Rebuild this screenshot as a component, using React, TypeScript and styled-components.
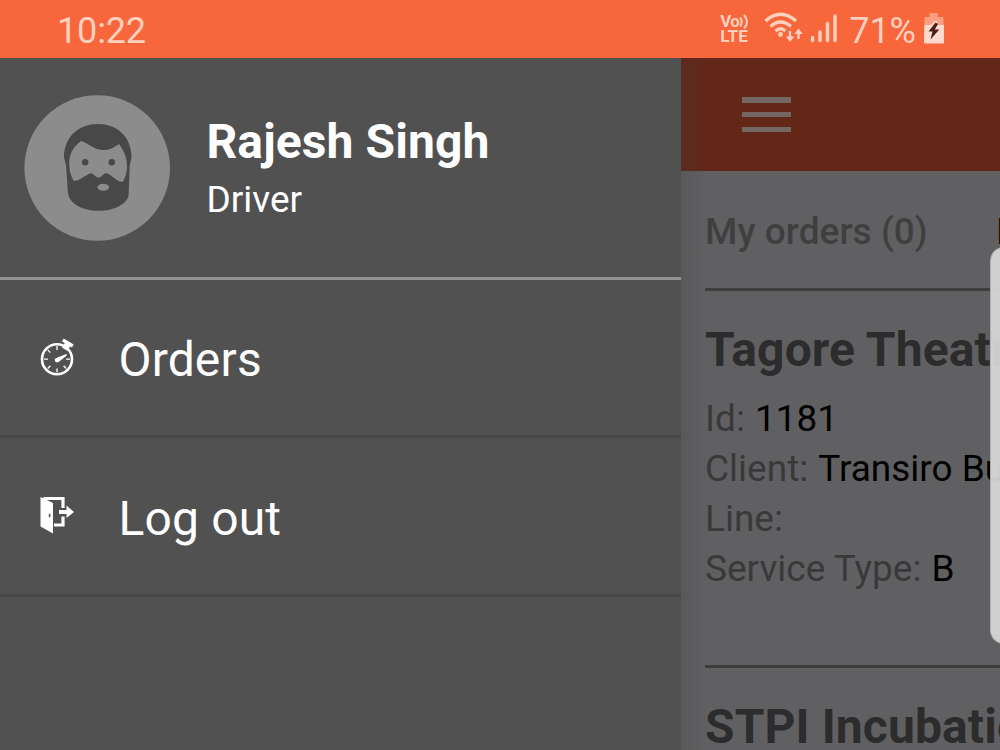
import React from "react";
import styled, { createGlobalStyle } from "styled-components";

const GlobalStyle = createGlobalStyle`
  * { box-sizing: border-box; }
  body { margin: 0; overflow: hidden; font-family: Roboto, "Liberation Sans", sans-serif; }
`;

const Screen = styled.div`
  position: relative;
  width: 1000px;
  height: 750px;
  overflow: hidden;
  display: flex;
  flex-direction: column;
  background: #515151;
`;

const StatusBar = styled.header`
  height: 58px;
  flex: none;
  display: flex;
  align-items: flex-start;
  padding: 9px 55px 0 57px;
  background: #f8663c;
  color: #ffd0bd;
`;

const StatusText = styled.span<{ $spacing?: number }>`
  margin-top: 1px;
  font-size: 36px;
  line-height: 42px;
  white-space: nowrap;
  letter-spacing: ${(p) => p.$spacing ?? 0}px;
`;

const StatusIcons = styled.div`
  margin-left: auto;
  display: flex;
  align-items: flex-start;
`;

const StatusGlyph = styled.span<{ $right?: number; $left?: number; $top: number }>`
  display: flex;
  margin: ${(p) => p.$top}px ${(p) => p.$right ?? 0}px 0 ${(p) => p.$left ?? 0}px;
`;

const VoLte = styled.div`
  display: flex;
  flex-direction: column;
  width: 31px;
  margin: 4px 13px 0 0;
  font-size: 17px;
  font-weight: 700;
  line-height: 16px;
  letter-spacing: 0.15px;
  white-space: nowrap;
`;

const VoLine = styled.span`
  display: flex;
  height: 15px;
  letter-spacing: -0.6px;
`;

const Body = styled.div`
  flex: 1;
  min-height: 0;
  display: flex;
`;

const Drawer = styled.aside`
  width: 681px;
  flex: none;
  background: #515151;
  color: #fff;
`;

const Profile = styled.section`
  height: 221.5px;
  display: flex;
  align-items: flex-start;
  padding: 37px 24px 0;
  border-bottom: 3px solid #939393;
`;

const ProfileText = styled.div`
  margin: 19px 0 0 35.5px;
  display: flex;
  flex-direction: column;
`;

const Name = styled.strong`
  font-size: 48px;
  line-height: 56px;
  font-weight: 700;
  letter-spacing: 0.1px;
`;

const Role = styled.span`
  font-size: 37px;
  line-height: 44px;
  margin-top: 8px;
`;

const MenuItem = styled.div`
  height: 158.5px;
  display: flex;
  align-items: center;
  padding-left: 36px;
  border-bottom: 3px solid #484848;
`;

const MenuLabel = styled.span`
  margin: 6px 0 0 40.5px;
  font-size: 48px;
  line-height: 56px;
  letter-spacing: 0.15px;
`;

const Page = styled.main`
  position: relative;
  flex: 1;
  min-width: 0;
  overflow: hidden;
  background: #606062;
`;

const EdgeShadow = styled.div`
  position: absolute;
  inset: 0 auto 0 0;
  width: 28px;
  background: linear-gradient(90deg, rgba(60, 60, 60, 0.2), rgba(60, 60, 60, 0));
`;

const AppBar = styled.div`
  height: 113px;
  padding: 39px 0 0 60.5px;
  background: #632718;
`;

const Burger = styled.div`
  width: 49.5px;
  display: flex;
  flex-direction: column;
  gap: 9.2px;
`;

const BurgerBar = styled.span`
  height: 5.6px;
  background: #746663;
`;

const Content = styled.div`
  padding-left: 24px;
  white-space: nowrap;
`;

const Tabs = styled.div`
  height: 119.5px;
  display: flex;
  align-items: flex-start;
  padding-top: 39px;
  width: 420px;
  border-bottom: 3px solid #3e3e3f;
  font-size: 37px;
  line-height: 44px;
  font-weight: 500;
`;

const Tab = styled.span<{ $active?: boolean }>`
  width: 291.4px;
  flex: none;
  letter-spacing: 0.05px;
  color: ${(p) => (p.$active ? "#3f3f40" : "#000")};
`;

const Order = styled.article`
  height: 377.5px;
  width: 420px;
  padding-top: 30px;
  border-bottom: 3px solid #3e3e3f;
`;

const OrderTitle = styled.h2`
  margin: 0 0 15px;
  font-size: 48px;
  line-height: 58px;
  font-weight: 700;
  color: #2c2c2d;
  letter-spacing: 0.1px;
`;

const Field = styled.div`
  font-size: 37px;
  line-height: 50px;
  color: #39393a;
`;

const Value = styled.span`
  margin-left: 0.8px;
  color: #000;
`;

const EdgeHandle = styled.div`
  position: absolute;
  left: 990px;
  top: 247px;
  width: 30px;
  height: 397px;
  border-radius: 14px;
  background: rgba(218, 218, 218, 0.92);
  border: 1px solid rgba(170, 170, 170, 0.8);
`;

const WifiIcon = () => (
  <svg width="40" height="32" viewBox="764 11 40 32" fill="none" stroke="#ffd0bd" strokeWidth="3.2">
    <path d="M765.500 21Q780.500 7.500 796 21" />
    <path d="M770.500 26.500Q780.500 17.500 791 26.500" />
    <path d="M775.500 31Q780.500 26.500 785.500 31" />
    <circle cx="780.500" cy="34.500" r="2.400" fill="#ffd0bd" stroke="none" />
    <path d="M790 31v7M798.500 39v-7" strokeWidth="2.400" />
    <path d="M785.800 36.500h8.400L790 42zM794.300 34h8.400L798.500 28.500z" fill="#ffd0bd" stroke="none" />
  </svg>
);

const SignalIcon = () => (
  <svg width="28" height="32" viewBox="810 11 28 32" stroke="#ffd0bd" strokeWidth="3.4" strokeLinecap="round">
    <path d="M812.500 37.500v3M820 32v8.500M827.500 23.500v17M835 16v24.500" />
  </svg>
);

const BatteryIcon = () => (
  <svg width="21" height="32" viewBox="924 12 21 32">
    <path d="M929.500 13h8v4h6v8h-19v-8h5z" fill="#fb9f84" />
    <path d="M924.300 25H931l4-4h2v4h7v17.500q0 1-1 1h-18q-1 0-1-1z" fill="#ffd9cb" />
    <path d="M935.500 22.500L928.500 31.500h4L930.500 39.500L939.300 29.500h-4.500L938 24z" fill="#4a2118" />
  </svg>
);

const Avatar = () => (
  <svg width="147" height="147" viewBox="24 94.5 147 147">
    <circle cx="97.200" cy="167.500" r="72.800" fill="#8c8c8c" />
    <path
      d="M64 157C64 137 78 123.500 98 123.500S131.500 137 131.500 157L129.700 165L128.700 193C128.500 204 113 210.300 98.500 210.300S68.500 204 67.800 191L66 165Z"
      fill="#484848"
    />
    <path
      d="M81 140.500C88 142.500 94 149.500 104 149.500C111 149.500 115 146 119 143.500C125 152 127 158 127 166C127 172 125 178 123 181C119 183 112 174.500 107 173C103 172 103 177 98.500 177C94 177 94 172 90 173C85 175 77 182 73.500 180C70 174 69 168 69.200 161C70 151 75 145 81 140.500Z"
      fill="#8c8c8c"
    />
    <circle cx="85.200" cy="161.700" r="3.200" fill="#484848" />
    <circle cx="111.800" cy="161.700" r="3.200" fill="#484848" />
    <ellipse cx="103.300" cy="186.700" rx="5.800" ry="3.500" fill="#8c8c8c" />
  </svg>
);

const StopwatchIcon = () => (
  <svg width="42" height="42" viewBox="36 336 42 42" fill="none" stroke="#fff">
    <circle cx="57" cy="359.200" r="15" strokeWidth="2.600" />
    <path
      d="M57 346v4M57 368.500v4M44 359.200h4M66 359.200h4M47.700 349.900l2.700 2.700M47.700 368.500l2.700-2.700M66.300 368.500l-2.700-2.700"
      strokeWidth="1.300"
    />
    <path d="M56 359L66 355L58 361.400Q55.500 361.800 55.600 360z" fill="#fff" strokeWidth="1.800" strokeLinejoin="round" />
    <path d="M62.800 340L72.800 346" strokeWidth="3.400" />
    <path d="M65.500 342L62 347.500L67.500 351L71 345z" fill="#fff" stroke="none" />
  </svg>
);

const LogoutIcon = () => (
  <svg width="42" height="42" viewBox="36 495 42 42">
    <path d="M40.500 497L53 503V533.500L40.500 526.500z" fill="#fff" />
    <path d="M43.500 498.500H63V508M63 516.500V525H54" fill="none" stroke="#fff" strokeWidth="3.200" />
    <path d="M59 510h7.500v-4.500L74 512L66.500 518v-4H59z" fill="#fff" />
    <ellipse cx="49.600" cy="515.500" rx="0.900" ry="1.900" fill="#515151" />
  </svg>
);

export default function App() {
  return (
    <Screen>
      <GlobalStyle />
      <StatusBar>
        <StatusText $spacing={-0.15}>10:22</StatusText>
        <StatusIcons>
          <VoLte>
            <VoLine>
              Vo
              <svg width="11" height="16" viewBox="0 0 11 16" fill="none" stroke="#ffd0bd" strokeWidth="2">
                <path d="M1 4.500Q4.500 9 1 13.500M5 2Q11 9 5 15.500" />
              </svg>
            </VoLine>
            <span>LTE</span>
          </VoLte>
          <StatusGlyph $top={2} $right={6}><WifiIcon /></StatusGlyph>
          <StatusGlyph $top={2} $right={11}><SignalIcon /></StatusGlyph>
          <StatusText>71%</StatusText>
          <StatusGlyph $top={3} $left={8}><BatteryIcon /></StatusGlyph>
        </StatusIcons>
      </StatusBar>
      <Body>
        <Drawer>
          <Profile>
            <Avatar />
            <ProfileText>
              <Name>Rajesh Singh</Name>
              <Role>Driver</Role>
            </ProfileText>
          </Profile>
          <MenuItem>
            <StopwatchIcon />
            <MenuLabel>Orders</MenuLabel>
          </MenuItem>
          <MenuItem>
            <LogoutIcon />
            <MenuLabel>Log out</MenuLabel>
          </MenuItem>
        </Drawer>
        <Page>
          <AppBar>
            <Burger>
              <BurgerBar />
              <BurgerBar />
              <BurgerBar />
            </Burger>
          </AppBar>
          <Content>
            <Tabs>
              <Tab $active>My orders (0)</Tab>
              <Tab>New orders</Tab>
            </Tabs>
            <Order>
              <OrderTitle>Tagore Theatre</OrderTitle>
              <Field>Id: <Value>1181</Value></Field>
              <Field>Client: <Value>Transiro Bus</Value></Field>
              <Field>Line:</Field>
              <Field>Service Type: <Value>B</Value></Field>
            </Order>
            <Order>
              <OrderTitle>STPI Incubation</OrderTitle>
            </Order>
          </Content>
          <EdgeShadow />
        </Page>
      </Body>
      <EdgeHandle />
    </Screen>
  );
}
